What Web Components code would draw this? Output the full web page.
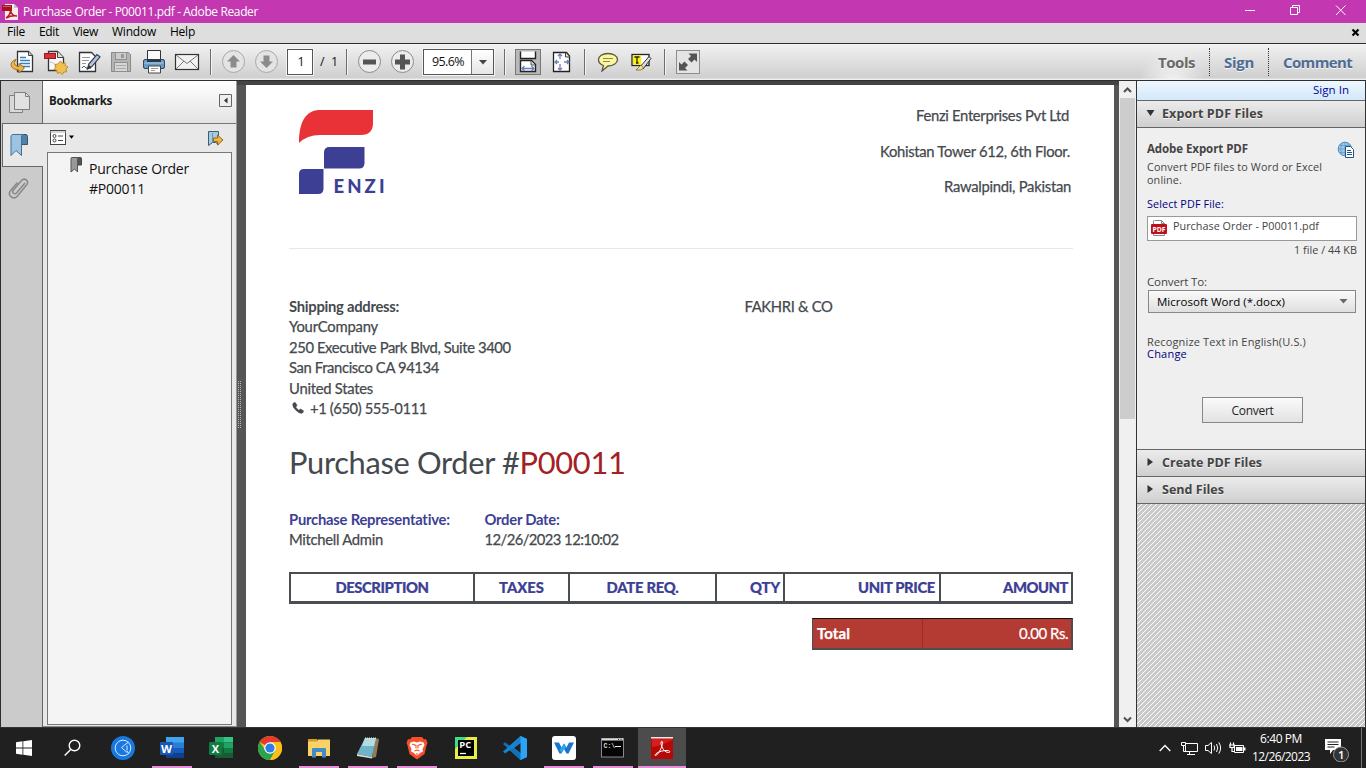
<!DOCTYPE html>
<html lang="en">
<head>
<meta charset="utf-8">
<title>Purchase Order - P00011.pdf - Adobe Reader</title>
<style>
html,body{margin:0;height:100%;overflow:hidden;background:#545454}
body{font-family:"Open Sans","Noto Sans",sans-serif;font-size:12px;color:#111}
</style>
</head>
<body>
<reader-app></reader-app>
<script>
function define(name, css, html) {
  const tpl = document.createElement('template');
  tpl.innerHTML = '<style>*{box-sizing:border-box}svg{display:block;flex:none}fit-text{flex:none}:host{display:block;box-sizing:border-box}' + css + '</style>' + html;
  customElements.define(name, class extends HTMLElement {
    constructor() {
      super();
      this.attachShadow({ mode: 'open' });
    }
    connectedCallback() {
      if (!this.shadowRoot.childNodes.length) this.shadowRoot.append(document.importNode(tpl.content, true));
    }
  });
}

/* Single line label that tracks its letters to occupy the width in its "w" attribute. */
customElements.define('fit-text', class extends HTMLElement {
  constructor() {
    super();
    this.attachShadow({ mode: 'open' }).innerHTML = '<style>:host{display:inline-block;white-space:nowrap}</style><span><slot></slot></span>';
  }
  connectedCallback() {
    const w = parseFloat(this.getAttribute('w'));
    const n = this.textContent.length;
    if (!w || !n) return;
    const natural = this.shadowRoot.querySelector('span').getBoundingClientRect().width;
    this.style.letterSpacing = ((w - natural) / n) + 'px';
  }
});

define('title-bar', `
:host{height:23px;background:#c337b1;color:#fff;display:flex;align-items:center;padding-left:2px;font-size:12px;line-height:23px}
fit-text{margin-left:5px}
.win{margin-left:auto}
`, `
<svg width="16" height="18" viewBox="0 0 16 18"><path d="M3 1h9l4 4v12H3z" fill="#f4eeee"/><path d="M12 1v4h4z" fill="#c9c2c2"/><path d="M0 2h10v6H0z" fill="#a5131d"/><path d="M1 3h8v1H1z" fill="#d65a5f"/><path d="M4 15c3-2 4.500-5 4.500-8 .5 4 3 6 6.500 6-4-.5-7 0-11 2z" fill="none" stroke="#c41320" stroke-width="1.500"/></svg>
<fit-text w="235">Purchase Order - P00011.pdf - Adobe Reader</fit-text>
<svg class="win" width="126" height="23" viewBox="0 0 126 23" fill="none" stroke="#fff" stroke-width="1"><path d="M5 10.500h10"/><path d="M50.500 7.500h7v7h-7zM52.500 7.500v-2h7v7h-2"/><path d="M96 5.500l9.500 9.500M105.500 5.500L96 15"/></svg>
`);

define('menu-bar', `
:host{height:20px;background:#dedede;color:#000;display:flex;align-items:flex-start;font-size:12px;line-height:18px;padding-left:7px}
fit-text+fit-text{margin-left:14px}
svg{margin-left:auto}
`, `
<fit-text w="18">File</fit-text><fit-text w="20">Edit</fit-text><fit-text w="25">View</fit-text><fit-text w="44">Window</fit-text><fit-text w="25">Help</fit-text>
<svg width="16" height="20" viewBox="0 0 16 20"><path d="M2.500 6.500l6 6M8.500 6.500l-6 6" stroke="#000" stroke-width="2.200"/></svg>
`);

define('tool-sep', ':host{flex:none;width:1px;height:26px;background:#6d6d6d;box-shadow:1px 0 #f4f4f4}', '');

define('tool-bar', `
:host{height:38px;border-top:1px solid #2e2e2e;border-bottom:1px solid #2e2e2e;background:linear-gradient(#f7f7f7 0,#f0f0f0 4%,#cfcfcf 95%,#f0f0f0 97%);display:flex;align-items:center;padding-left:8px;font-size:12.500px;line-height:24px;color:#111}
.i{margin-right:4px}
.page{width:26px;height:26px;border:1px solid #555;background:#fff;box-shadow:0 0 0 1px #f5f5f5;text-align:center;padding-left:2px}
.zoom{width:71px;height:26px;border:1px solid #555;background:#fff;box-shadow:0 0 0 1px #f5f5f5;display:flex;padding-left:8px}
.zoom div{margin-left:auto;width:22px;border-left:1px solid #777;background:linear-gradient(#fff,#e6e6e6);display:grid;place-items:center}
.tabs{margin-left:auto;align-self:stretch;display:flex;align-items:center;padding-right:14px;font-size:15px;font-weight:700;color:#4f6d93;text-shadow:0 1px #f5f5f5}
.tabs i{width:0;height:28px;border-left:1px dotted #333}
.tools{color:#6a6a68;padding:0 14px 0 22px;background:radial-gradient(ellipse at 50% 110%,#f4f4f4,transparent 65%);line-height:36px}
`, `
<svg class="i" width="29" height="28" viewBox="0 0 29 28"><path d="M9.500 3.500h11l4 4v16h-15z" fill="#fff" stroke="#333" stroke-width="1.300"/><path d="M20.500 3.500v4h4" fill="#ccc" stroke="#444"/><path d="M12 9.500h6M12 12.500h10M12 15.500h10M14 18.500h8" stroke="#3a7fc0" stroke-width="1.400"/><path d="M8 11.500c-7 2-7 10 3 10.500v3l5.500-5-5.500-4.500v3c-4-.5-6-3-3-7z" fill="#eeb447" stroke="#9a6a1c"/></svg>
<svg class="i" width="29" height="28" viewBox="0 0 29 28"><path d="M7.500 3.500h9l6 6v13h-15z" fill="#f8f8f8" stroke="#333" stroke-width="1.300"/><path d="M16.500 3.500v6h6" fill="#ddd" stroke="#444"/><rect x="3.500" y="5.500" width="11" height="5" fill="#d8303c" stroke="#a01420"/><path d="M9 14c4 0 6 3 5 6" stroke="#bbb" fill="none"/><path d="M19.500 13l1.700 2.500 2.900-.7.200 2.900 2.700 1.300-2 2 .8 2.800-2.900.2-1.600 2.500-2.200-2-2.700 1-.5-2.900-2.700-1.200 1.800-2.300-1-2.700 2.900-.4z" fill="#f3c04f" stroke="#b57d1a" stroke-width=".8"/></svg>
<svg class="i" width="29" height="28" viewBox="0 0 29 28"><path d="M5.500 4.500h12l4 4v15h-16z" fill="#fff" stroke="#333" stroke-width="1.300"/><path d="M8 9.500h8M8 12.500h7M8 15.500h4" stroke="#999"/><path d="M8 20c2-3 3-1 4 0h5" fill="none" stroke="#333"/><path d="M13.500 21l1.300-5L23 6.500l3 2.300-8.300 10z" fill="#b8c6d6" stroke="#2f4358" stroke-width="1.200"/><path d="M13.500 21l1.300-4 2.400 2z" fill="#333"/></svg>
<svg class="i" width="29" height="28" viewBox="0 0 29 28"><path d="M4.500 4.500h17l2 2v17h-19z" fill="#b4b4b4" stroke="#8a8a8a"/><rect x="8.500" y="4.500" width="11" height="7" fill="#cdcdcd" stroke="#909090"/><rect x="14" y="6" width="3" height="4" fill="#999"/><rect x="7.500" y="14.500" width="13" height="9" fill="#d6d6d6" stroke="#909090"/><path d="M9 17.500h10M9 20.500h10" stroke="#aaa"/></svg>
<svg class="i" width="29" height="28" viewBox="0 0 29 28"><path d="M7.500 2.500h13v11h-13z" fill="#fafafa" stroke="#333"/><rect x="3.500" y="11.500" width="21" height="9" rx="1.500" fill="#6b9bc4" stroke="#274b6b"/><path d="M7 11h14v3H7z" fill="#29394a"/><path d="M4.500 15h19" stroke="#a9cdea"/><path d="M8.500 18h12v7h-12z" fill="#fff" stroke="#444"/><path d="M11 20.500h7M11 22.500h4" stroke="#999"/></svg>
<svg width="29" height="28" viewBox="0 0 29 28"><rect x="2.500" y="6.500" width="23" height="15" fill="#f2f2f2" stroke="#333" stroke-width="1.200"/><path d="M3 7l11 8.500L25 7M3 21l8-8M25 21l-8-8" fill="none" stroke="#777"/></svg>
<tool-sep style="margin-left:8px"></tool-sep>
<svg style="margin-left:9px" width="27" height="28" viewBox="0 0 27 28"><circle cx="13.500" cy="13.500" r="11" fill="#e4e4e4" stroke="#a8a8a8"/><path d="M13.500 7l6.500 6.500h-3.500v6h-6v-6H7z" fill="#8b8b8b"/></svg>
<svg style="margin-left:6px" width="27" height="28" viewBox="0 0 27 28"><circle cx="13.500" cy="13.500" r="11" fill="#e4e4e4" stroke="#a8a8a8"/><path d="M13.500 20l6.500-6.500h-3.500v-6h-6v6H7z" fill="#8b8b8b"/></svg>
<div class="page" style="margin-left:7px">1</div>
<fit-text w="18" style="margin-left:7px">/ &nbsp;1</fit-text>
<tool-sep style="margin-left:8px"></tool-sep>
<svg style="margin-left:9px" width="27" height="28" viewBox="0 0 27 28"><circle cx="13.500" cy="13.500" r="11" fill="#ececec" stroke="#8b8b8b"/><rect x="7" y="11.500" width="13" height="5" fill="#555"/></svg>
<svg style="margin-left:6px" width="27" height="28" viewBox="0 0 27 28"><circle cx="13.500" cy="13.500" r="11" fill="#ececec" stroke="#8b8b8b"/><path d="M11 6.500h5v5h5v5h-5v5h-5v-5H6v-5h5z" fill="#555"/></svg>
<div class="zoom" style="margin-left:7px"><fit-text w="32">95.6%</fit-text><div><svg width="8" height="5" viewBox="0 0 8 5"><path d="M0 0h8L4 4.500z" fill="#444"/></svg></div></div>
<tool-sep style="margin-left:10px"></tool-sep>
<svg style="margin-left:10px" width="26" height="26" viewBox="0 0 26 26"><rect x=".5" y=".5" width="25" height="25" fill="#b9b9b9" stroke="#777"/><path d="M5.500 2.500v7h15v-7" fill="#fff" stroke="#222" stroke-width="1.400"/><path d="M5.500 22.500v-11h11l4 4v7z" fill="#fff" stroke="#222" stroke-width="1.400"/><path d="M16 12v4h4" fill="#ddd" stroke="#555"/><path d="M7 19.500h12M9.500 17L7 19.500 9.500 22M16.500 17l2.500 2.500-2.500 2.500" fill="none" stroke="#6a7db8" stroke-width="1.300"/></svg>
<svg style="margin-left:11px" width="20" height="22" viewBox="0 0 20 22"><path d="M1.500 1.500h13l3 3.500v15.500h-16z" fill="#fff" stroke="#222" stroke-width="1.300"/><path d="M13.500 2v4h4" fill="#ddd" stroke="#444"/><path d="M8 3v5M8 13v6M3 11h4M12 11h5M6 5l2-2 2 2M6 17l2 2 2-2M5 9l-2 2 2 2M15 9l2 2-2 2" fill="none" stroke="#7280b4" stroke-width="1.300"/></svg>
<tool-sep style="margin-left:12px"></tool-sep>
<svg style="margin-left:12px" width="22" height="20" viewBox="0 0 22 20"><path d="M11 1.500c5.500 0 9.500 2.600 9.500 6S16.500 14 11 14l-6 5 1.500-5.500C3.500 12.500 1.500 10.500 1.500 7.500c0-3.400 4-6 9.500-6z" fill="#fdf6a0" stroke="#5c5a3e" stroke-width="1.300"/><path d="M6 6.500h10M6 9.500h7" stroke="#8c8753"/></svg>
<svg style="margin-left:12px" width="21" height="20" viewBox="0 0 21 20"><rect x="1" y="2.500" width="17" height="11" fill="#fff" stroke="#222" stroke-width="1.300"/><rect x="2" y="3.500" width="8" height="9" fill="#fdf000"/><path d="M3.500 5h5M6 5v6M5 11h2.500" stroke="#222" stroke-width="1.300"/><path d="M9 15L18 4.500l2 2L12 17z" fill="#ddd" stroke="#333"/><path d="M5 18h5l2.500-2-2.500-3z" fill="#f7ea53" stroke="#555" stroke-width=".7"/></svg>
<tool-sep style="margin-left:12px"></tool-sep>
<svg style="margin-left:11px" width="24" height="24" viewBox="0 0 24 24"><rect x=".5" y=".5" width="23" height="23" fill="#e4e4e4" stroke="#8d8d8d"/><path d="M12.500 3.500h8.500V12l-2.500-2.500-3 3-3.500-3.500 3-3zM3 12v8.500h8.500L9 18l3-3-3.500-3.500-3 3z" fill="#555"/></svg>
<div class="tabs"><div class="tools"><fit-text w="37">Tools</fit-text></div><i></i><fit-text w="30" style="margin:0 14px">Sign</fit-text><i></i><fit-text w="69" style="margin-left:14px">Comment</fit-text></div>
`);

define('nav-strip', `
:host{width:43px;border-left:1px solid #2e2e2e;border-right:1px solid #666;background:#cbcbcb;flex:none}
div{height:42px;display:grid;place-items:center}
.sel{height:44px;background:#e8e8e8;border:1px solid #666;border-right:0;margin:0 -1px 0 1px}
svg{margin-right:5px}
`, `
<div><svg width="24" height="26" viewBox="0 0 24 26" fill="#d9d9d9" stroke="#808080"><path d="M2.500 6.500h13v17h-13z"/><path d="M7.500 3.500h11l4 4v13h-15z" fill="#e2e2e2"/><path d="M18.500 3.500v4h4" fill="none"/></svg></div>
<div class="sel"><svg style="margin-right:8px" width="20" height="24" viewBox="0 0 20 24"><path d="M12 1.500h5c1 0 1.500 1 1.500 2v8h-6z" fill="#4f82a8" stroke="#35546c"/><path d="M4 1.500h11c-2 0-2.500 1-2.500 3v18L7 17.500l-5 5V4c0-1.500.5-2.500 2-2.500z" fill="#9cc4e2" stroke="#46708f"/></svg></div>
<div><svg width="24" height="26" viewBox="0 0 24 26" fill="none" stroke="#888" stroke-width="1.500"><path d="M18 8l-8.500 10c-2 2-5-.5-3.200-2.800L14.500 5.500c3-3.300 8 .4 5.200 4.200L10.500 21c-4 4.500-10.500-.5-7-5.300l7-8.200"/></svg></div>
`);

define('bookmarks-panel', `
:host{width:194px;flex:none;background:#e8e8e8;border-right:1px solid #999;border-bottom:1px solid #888;display:flex;flex-direction:column}
header{height:43px;border-bottom:1px solid #777;background:linear-gradient(#fff,#e3e3e3);display:flex;align-items:center;justify-content:space-between;padding:0 4px 3px 6px;font-weight:700;font-size:11.500px;color:#1c1c1c}
.opts{height:28px;display:flex;justify-content:space-between;align-items:center;padding:0 12px 0 7px}
.list{flex:1;margin:0 4px 1px 4px;border:1px solid #777;background:#f4f4f4;display:flex;align-items:flex-start;padding:4px 0 0 22px;font-size:14px;line-height:20px;color:#111}
.list div{margin:2px 0 0 7px}
`, `
<header><fit-text w="63">Bookmarks</fit-text><svg width="13" height="13" viewBox="0 0 13 13"><path d="M.5.500h12v12H.5z" fill="#efefef" stroke="#666"/><path d="M8.500 3.500v6L5 6.500z" fill="#333"/></svg></header>
<div class="opts"><svg width="26" height="16" viewBox="0 0 26 16"><rect x=".5" y=".5" width="15" height="14" fill="#fff" stroke="#444"/><path d="M0 2h16" stroke="#aaa"/><circle cx="4.500" cy="6" r="1.500" fill="none" stroke="#444"/><circle cx="4.500" cy="10.500" r="1.500" fill="none" stroke="#444"/><path d="M8 6h5M8 10.500h5" stroke="#444"/><path d="M19 5.500h5l-2.500 3.200z" fill="#000"/></svg>
<svg width="17" height="17" viewBox="0 0 17 17"><path d="M1.500 1.500h10v13l-3-2-3 0-4 3z" fill="#a8cbe4" stroke="#3b5d78"/><path d="M5.500 3v9" stroke="#6a94b3"/><path d="M6.500 8h4V5l5.500 5-5.500 5v-3.500h-4z" fill="#f2b63c" stroke="#94681a"/></svg></div>
<div class="list"><svg width="12" height="16" viewBox="0 0 12 16"><path d="M7 .5h3.500q1 0 1 1V8H7z" fill="#555" stroke="#444"/><path d="M1.500.5H9Q7.500.5 7.500 3v12L4.500 12l-3.500 3V1.500z" fill="#999" stroke="#555"/></svg>
<div><fit-text w="100">Purchase Order</fit-text><br><fit-text w="56">#P00011</fit-text></div></div>
`);

define('panel-splitter', `
:host{width:9px;flex:none;background:#555;border-top:4px solid #444;display:grid;align-content:center;padding:0 0 3px 1px}
`, `<svg width="6" height="48"><defs><pattern id="g" width="2" height="2" patternUnits="userSpaceOnUse"><rect width="1" height="1" fill="#bbb"/></pattern></defs><rect width="4" height="48" fill="url(#g)"/></svg>`);

define('company-logo', ':host{width:110px;height:100px}', `
<svg width="110" height="100" viewBox="0 0 110 100">
<path d="M10 33C10 10 18 0 31 0H84V13Q84 25 72 25H31Q18 25 10 33z" fill="#e93237"/>
<path d="M35 42.500Q35 37 40.500 37H75.500V53Q75.500 58.500 70 58.500H35z" fill="#3d3f94"/>
<path d="M10 64Q10 59 15 59H34.500V78.500Q34.500 84 29 84H10z" fill="#3d3f94"/>
<text x="44.500" y="83.300" font-family="Lato,sans-serif" font-weight="900" font-size="18.500" textLength="51" fill="#3d3f94" stroke="none">ENZI</text></svg>
`);

define('order-table', `
:host{display:grid;grid-template-columns:182px 93px 145px 66px 154px 130px;column-gap:2px;background:#4a4e52;border:2px solid #4a4e52;border-bottom-width:3px;color:#3d3f94;font-weight:900;font-size:14.800px;line-height:27px;-webkit-text-stroke:.2px}
div{background:#fff;text-align:right;padding:0 4px 0 0}
.c{text-align:center;padding:0}
`, `
<div class="c"><fit-text w="93">DESCRIPTION</fit-text></div><div class="c"><fit-text w="45">TAXES</fit-text></div><div class="c"><fit-text w="72">DATE REQ.</fit-text></div><div style="padding-right:3px"><fit-text w="30">QTY</fit-text></div><div><fit-text w="77">UNIT PRICE</fit-text></div><div style="padding-right:3px"><fit-text w="65">AMOUNT</fit-text></div>
`);

define('order-total', `
:host{width:261px;height:32px;margin:14px 0 0 auto;display:grid;grid-template-columns:110px 1fr;background:#b43b34;border:solid #4a4e52;border-width:1px 2px 2px 1px;border-top-color:#111;color:#fff;font-size:15px;line-height:29px}
b{padding-left:4px;border-right:1px solid #a02a26}
div{text-align:right;padding-right:3px}
`, '<b><fit-text w="33">Total</fit-text></b><div><fit-text w="49">0.00 Rs.</fit-text></div>');

define('pdf-page', `
:host{width:868px;flex:none;background:#fff;padding:0 41px 0 43px;font-family:Lato,sans-serif;font-size:14.800px;color:#45494d;-webkit-text-stroke:.25px}
.head{height:163px;display:flex;justify-content:space-between;padding-top:25px}
.addr{text-align:right;line-height:35.500px;margin-top:-12px}
.addr div:nth-child(1){padding-right:4px}.addr div:nth-child(2){padding-right:3px}.addr div:nth-child(3){padding-right:2px}
.rule{height:1px;background:#e8e8e8}
.ship{display:grid;grid-template-columns:455.500px 1fr;padding-top:46.600px;line-height:20.500px;height:179px}
.ph{display:flex;align-items:center}
h1{margin:0;font-weight:400;font-size:30.800px;line-height:40px;height:81px;padding-top:15px;-webkit-text-stroke:0}
h1 span{color:#a32024}
.meta{display:grid;grid-template-columns:195.500px 1fr;grid-template-rows:20px 20px;line-height:20px;height:63px;align-content:start}
.meta b,.meta b fit-text{color:#3d3f94}
b{-webkit-text-stroke:0}
`, `
<div class="head"><company-logo></company-logo><div class="addr"><div><fit-text w="153">Fenzi Enterprises Pvt Ltd</fit-text></div><div><fit-text w="190">Kohistan Tower 612, 6th Floor.</fit-text></div><div><fit-text w="127">Rawalpindi, Pakistan</fit-text></div></div></div>
<div class="rule"></div>
<div class="ship"><div><b><fit-text w="110">Shipping address:</fit-text></b><br><fit-text w="89">YourCompany</fit-text><br><fit-text w="222">250 Executive Park Blvd, Suite 3400</fit-text><br><fit-text w="150">San Francisco CA 94134</fit-text><br><fit-text w="84">United States</fit-text><div class="ph"><svg style="margin:0 6px 0 3px" width="12" height="12" viewBox="0 0 12 12"><path d="M.8 1.800Q1.800.5 3.300.6L5 3.600 3.700 5.100Q4.800 7.200 6.900 8.300L8.400 7l3 1.700q.1 1.500-1.200 2.500Q8 12 4.600 8.900.2 5.200.8 1.800z" fill="#45494d" stroke="#45494d" stroke-width=".6"/></svg><fit-text w="117">+1 (650) 555-0111</fit-text></div></div><div><fit-text w="88">FAKHRI &amp; CO</fit-text></div></div>
<h1><fit-text w="336.500">Purchase Order #<span>P00011</span></fit-text></h1>
<div class="meta"><b><fit-text w="161">Purchase Representative:</fit-text></b><b><fit-text w="75">Order Date:</fit-text></b><div><fit-text w="94">Mitchell Admin</fit-text></div><div><fit-text w="134">12/26/2023 12:10:02</fit-text></div></div>
<order-table></order-table>
<order-total></order-total>
`);

define('doc-view', `
:host{flex:1;min-width:0;background:#555;border-top:4px solid #444;display:flex}
`, '<pdf-page></pdf-page>');

define('scroll-bar', `
:host{width:17px;flex:none;background:#f0f0f0;display:flex;flex-direction:column;align-items:center;padding:5px 0 4px}
.thumb{width:15px;height:321px;background:#cdcdcd;margin:4px 0 auto}
`, `
<svg width="9" height="8" viewBox="0 0 9 8"><path d="M1 6l3.500-3.500L8 6" fill="none" stroke="#505050" stroke-width="2"/></svg><div class="thumb"></div><svg width="9" height="7" viewBox="0 0 9 7"><path d="M1 1.500L4.500 5 8 1.500" fill="none" stroke="#505050" stroke-width="2"/></svg>
`);

define('section-head', `
:host{height:27px;background:linear-gradient(#ececec,#cfcfcf);border-bottom:1px solid #666;display:flex;align-items:center;padding:0 0 2px 9px;font-size:12.500px;font-weight:700;color:#444;text-shadow:0 1px #f4f4f4}
svg{margin-right:7px}
.down{display:none}
:host([open]) .down{display:block}
:host([open]) .right{display:none}
`, `
<svg class="down" width="9" height="8" viewBox="0 0 9 8"><path d="M.5 1h8L4.500 7z" fill="#333"/></svg><svg class="right" width="9" height="8" viewBox="0 0 9 8"><path d="M1.500 0v8l5.500-4z" fill="#333"/></svg><slot></slot>
`);

define('export-form', `
:host{height:322px;background:#efefef;padding:13px 8px 0 10px;font-size:10.800px;line-height:13px;color:#444;border-bottom:1px solid #666}
.top{display:flex;justify-content:space-between;height:50px}
.top b{font-size:11.500px;line-height:15px}
.lnk{color:#00007f}
.file{height:25px;border:1px solid #999;background:#fff;display:flex;align-items:center;padding:0 0 1px 2px;margin-top:6px}
.file fit-text{margin:-5px 0 0 5px}
.size{text-align:right;margin-top:2px}
.sel{height:23px;margin:2px 1px 0;border:1px solid #888;background:linear-gradient(#fafafa,#dfdfdf);display:flex;align-items:center;justify-content:space-between;padding:0 7px 0 8px;font-size:11.500px;color:#000}
.btn{width:101px;height:26px;margin:37px 0 0 55px;border:1px solid #888;background:linear-gradient(#fafafa,#e2e2e2);display:grid;place-content:center;font-size:12px;color:#222}
`, `
<div class="top"><div><b><fit-text w="101">Adobe Export PDF</fit-text></b><br><fit-text w="175" style="margin-top:4px">Convert PDF files to Word or Excel</fit-text><br><fit-text w="35">online.</fit-text></div>
<svg style="margin-right:2px" width="18" height="18" viewBox="0 0 18 18"><circle cx="8" cy="8" r="6.800" fill="#9ec9ea" stroke="#4a86b8"/><path d="M1.500 8h13M8 1.500v13M3 4.500h10M3 11.500h10M5 2.500q-3 5.500 0 11M11 2.500q3 5.500 0 11" stroke="#5c95c2" fill="none" stroke-width=".7"/><path d="M8.500 5.500h5l3 3v8h-8z" fill="#fff" stroke="#24518a"/><path d="M10 9.500h4M10 11.500h5M10 13.500h5" stroke="#24518a"/></svg></div>
<div class="lnk" style="margin-top:6px"><fit-text w="77">Select PDF File:</fit-text></div>
<div class="file"><svg width="18" height="18" viewBox="0 0 18 18"><path d="M4.500 1.500h7l3 3v12h-11v-15" fill="#fff" stroke="#888"/><path d="M11.500 1.500v3h3" fill="none" stroke="#888"/><rect x="1" y="5" width="16" height="10" rx="1" fill="#c00f1c"/><text x="2.500" y="12.800" font-family="Open Sans,sans-serif" font-size="7.500" font-weight="700" textLength="13" fill="#fff" lengthAdjust="spacingAndGlyphs">PDF</text></svg><fit-text w="146">Purchase Order - P00011.pdf</fit-text></div>
<div class="size"><fit-text w="63">1 file / 44 KB</fit-text></div>
<div style="margin-top:19px;font-size:11.500px"><fit-text w="60">Convert To:</fit-text></div>
<div class="sel"><fit-text w="128">Microsoft Word (*.docx)</fit-text><svg width="9" height="5" viewBox="0 0 9 5"><path d="M.5 0h8l-4 4.500z" fill="#666"/></svg></div>
<div style="margin-top:23px;font-size:11px;line-height:12px"><fit-text w="159">Recognize Text in English(U.S.)</fit-text><br><fit-text class="lnk" w="40">Change</fit-text></div>
<div class="btn"><fit-text w="42">Convert</fit-text></div>
`);

define('tools-panel', `
:host{width:230px;flex:none;border:solid #333;border-width:0 1px;display:flex;flex-direction:column}
.in{height:20px;background:linear-gradient(#eef7ff,#d3e8f9);border-bottom:1px solid #666;text-align:right;padding-right:16px;font-size:11.500px;line-height:18px;color:#0000a0}
svg{flex:1}
`, `
<div class="in"><fit-text w="36">Sign In</fit-text></div>
<section-head open><fit-text w="101">Export PDF Files</fit-text></section-head>
<export-form></export-form>
<section-head><fit-text w="100">Create PDF Files</fit-text></section-head>
<section-head><fit-text w="62">Send Files</fit-text></section-head>
<svg width="228"><defs><pattern id="h" width="5" height="5" patternUnits="userSpaceOnUse"><path d="M4 0h1v1h-1zM3 1h1v1h-1zM2 2h1v1h-1zM1 3h1v1h-1zM0 4h1v1h-1z" fill="#fff" shape-rendering="crispEdges"/></pattern></defs><rect width="228" height="300" fill="#cacaca"/><rect width="228" height="300" fill="url(#h)"/></svg>
`);

define('task-button', `
:host{width:49px;height:40px;flex:none;display:grid;place-items:center;padding:0 4px}
:host([run]){background:linear-gradient(#e48fd8,#e48fd8) 5px 38px/40px 2px no-repeat}
:host([active]){background:linear-gradient(#e48fd8,#e48fd8) 1px 38px/48px 2px no-repeat,linear-gradient(#4b4c4b,#4b4c4b) 1px 0/48px 40px no-repeat}
`, '<slot></slot>');

define('task-bar', `
:host{height:40px;background:#1f201f;display:flex;color:#fff;font-size:11px}
.tray{margin-left:auto;display:flex;align-items:center}
.clock{width:66px;text-align:center;line-height:18px;margin-left:2px;font-size:12px}
.show{width:1px;height:40px;background:#777;margin:0 4px 0 11px}
`, `
<task-button style="width:48px"><svg width="16" height="16" viewBox="0 0 16 16" fill="#fff"><path d="M0 2.300l6.500-1v6.200H0zM7.300 1.200L16 0v7.500H7.300zM0 8.400h6.500v6.300l-6.500-1zM7.300 8.400H16V16l-8.700-1.200z"/></svg></task-button>
<task-button style="width:50px"><svg style="margin-right:2px" width="17" height="18" viewBox="0 0 17 18" fill="none" stroke="#fff" stroke-width="1.400"><circle cx="10.500" cy="6.500" r="5.300"/><path d="M6.700 10.500L.7 16.500"/></svg></task-button>
<task-button><svg width="24" height="24" viewBox="0 0 24 24"><circle cx="12" cy="12" r="12" fill="#1877e0"/><circle cx="12" cy="12" r="7.800" fill="none" stroke="#d9ecff"/><path d="M17.500 6l-7 5.500 5.500 5M18 18l-2-3M16 9.500v5" fill="none" stroke="#d9ecff"/></svg></task-button>
<task-button run><svg width="24" height="24" viewBox="0 0 24 24"><path d="M6 1h18v6H6z" fill="#41a5ee"/><path d="M6 6.500h18V12H6z" fill="#2b7cd3"/><path d="M6 12h18v5.500H6z" fill="#185abd"/><path d="M6 17.500h18V22H6z" fill="#103f91"/><rect y="6" width="13" height="13" rx="1" fill="#1a56b4"/><text x="1" y="16.500" font-family="Open Sans" font-size="11" font-weight="700" fill="#fff" textLength="11" lengthAdjust="spacingAndGlyphs">W</text></svg></task-button>
<task-button><svg width="24" height="24" viewBox="0 0 24 24"><path d="M6 1h9v10H6z" fill="#21a366"/><path d="M15 1h9v5.500h-9z" fill="#33c481"/><path d="M15 6.500h9V12h-9z" fill="#21a366"/><path d="M6 6.500h9V12H6zM15 12h9v5h-9z" fill="#107c41"/><path d="M6 12h9v5h9v5H6z" fill="#185c37"/><rect y="6" width="13" height="13" rx="1" fill="#107c41"/><text x="2.700" y="16.500" font-family="Open Sans" font-size="11" font-weight="700" fill="#fff">X</text></svg></task-button>
<task-button><svg width="24" height="24" viewBox="0 0 24 24"><circle cx="12" cy="12" r="12" fill="#fbc116"/><path d="M12 12L1.600 6A12 12 0 0 1 22.400 6z" fill="#e33b2e"/><path d="M1.600 6A12 12 0 0 0 12 24l5-9-8 1.500z" fill="#2ba24c"/><path d="M12 6h10.400A12 12 0 0 1 12 24l5.200-9z" fill="#fbc116"/><circle cx="12" cy="12" r="5.800" fill="#fff"/><circle cx="12" cy="12" r="4.600" fill="#2f7de9"/></svg></task-button>
<task-button run><svg width="22" height="20" viewBox="0 0 22 20"><path d="M0 1h9l1 2v4H0z" fill="#d99b1b"/><path d="M0 3.500h9l1-2h12V18H0z" fill="#fbd267"/><path d="M4 19.500V11q0-1 1-1h12q1 0 1 1v8.500h-4V14H8v5.500z" fill="#3f8cc9"/></svg></task-button>
<task-button run><svg width="24" height="24" viewBox="0 0 24 24"><path d="M19 2l4 1-3 18-4 1z" fill="#947b55"/><path d="M9 2h11l-4 19-15-3z" fill="#6fb4c8"/><path d="M9 2h11l-2 8H6z" fill="#b5dbe4"/><path d="M1 18l15 3v1.500L1 20z" fill="#dcdcdc"/><path d="M9 2h11" stroke="#eee" stroke-dasharray="1 1"/></svg></task-button>
<task-button run><svg width="22" height="24" viewBox="0 0 22 24"><path d="M6 1h10l2 2.500 2-.5 1.500 4-1 2.500-2 8.500L11 23.500 3.500 18l-2-8.500L.5 7 2 3l2 .5z" fill="#f4502a"/><path d="M4.500 6.500L8 5.500l3 1 3-1 3.500 1 1 2.500-2 4 .5 2.500-3 1.500-3 3-3-3-3-1.500.5-2.500-2-4z" fill="#fff"/><path d="M6 8l4 1.500v3M16 8l-4 1.500v3M8.500 15L11 14l2.500 1M11 17v3" fill="none" stroke="#f4502a" stroke-width="1.100"/></svg></task-button>
<task-button><svg width="22" height="22" viewBox="0 0 22 22"><rect width="22" height="22" fill="#e9ee46"/><path d="M0 0h12L0 12z" fill="#3fdc84"/><rect x="3" y="3" width="16" height="16" fill="#000"/><text x="4.300" y="11" font-family="Open Sans" font-size="8.500" font-weight="700" fill="#fff" textLength="12" lengthAdjust="spacingAndGlyphs">PC</text><path d="M5 16.500h6" stroke="#fff" stroke-width="1.300"/></svg></task-button>
<task-button><svg width="24" height="24" viewBox="0 0 24 24"><path d="M17.500 0L24 3v18l-6.500 3L5 12.500zM18 6.500L11 12l7 5.500z" fill="#1f8fdf" fill-rule="evenodd"/><path d="M0 8l2-1.800L18 18v6h-.5z" fill="#0f71bb"/><path d="M0 15.500l2 2L18 6.500V0h-.5z" fill="#1683cf"/><path d="M17.500 0L24 3v18l-6.500 3z" fill="#2aa4f4"/></svg></task-button>
<task-button run><svg width="24" height="24" viewBox="0 0 24 24"><rect width="24" height="24" rx="3" fill="#fff"/><path d="M2 6.500h5l2.500 5L12 7.500l2.500 4 2.500-5h5l-5.500 11h-2L12 13l-2.500 4.500h-2z" fill="#1a73cc"/><path d="M12 7.500l2.500 4L12 13l-2.500 4.500-2-4 2-2z" fill="#27a9ec"/></svg></task-button>
<task-button run><svg width="23" height="20" viewBox="0 0 23 20"><rect x=".5" y=".5" width="22" height="18.500" fill="#050505" stroke="#8a8a8a"/><path d="M1 1.500h21" stroke="#ddd" stroke-width="2"/><path d="M17 1.500h1M19.500 1.500h1" stroke="#333"/><text x="2.500" y="9.500" font-family="Liberation Mono" font-size="6.500" font-weight="700" fill="#ddd">C:\\</text><path d="M14 8.500h6" stroke="#eee"/></svg></task-button>
<task-button active><svg width="22" height="22" viewBox="0 0 22 22"><rect width="22" height="22" rx="1" fill="#b80707"/><path d="M0 0h22v1.500H0z" fill="#f2eaea"/><path d="M1 10Q10 9 21 3v-1H1z" fill="#d3201d"/><path d="M11 4.500C9.500 4.500 9.800 7 11 10c1.500 3.500 4 5.500 6.500 5.500 2.500 0 1.500-2-1.500-2-4 0-7 .8-10 2.500-3 1.800-2 3.500-.3 2 2-1.800 4-5.500 5-8.500.8-2.500 1.300-5 .3-5z" fill="none" stroke="#fff" stroke-width="1"/></svg></task-button>
<div class="tray">
<svg width="12" height="8" viewBox="0 0 12 8"><path d="M.7 7L6 1.500 11.300 7" fill="none" stroke="#fff" stroke-width="1.300"/></svg>
<svg style="margin-left:10px" width="17" height="15" viewBox="0 0 17 15" fill="none" stroke="#fff"><path d="M4.500 2.500h12v8h-12V5M8.500 11v3M6 13.500h8"/><path d="M.5 1.500h4v3h-4zM2.500 4.500v6H5"/></svg>
<svg style="margin-left:7px" width="17" height="14" viewBox="0 0 17 14" fill="none" stroke="#fff"><path d="M.5 4.500h2.500l3.500-3v11l-3.500-3H.5z"/><path d="M9 4.500q1.500 2.500 0 5M11.500 3q2.500 4 0 8M13.800 1.300q3.600 5.700 0 11.400"/></svg>
<svg style="margin-left:7px" width="17" height="13" viewBox="0 0 17 13"><path d="M5.500 3.500h9v7h-9z" fill="none" stroke="#fff"/><path d="M7 5h6.500v4H7zM15 5.500h1.500v3H15z" fill="#fff"/><path d="M1.500.5v2M4.500.5v2M0 3h6M1 3v2.500h4V3M3 5.500v4h2.500" fill="none" stroke="#fff" stroke-width="1.200"/></svg>
<div class="clock"><fit-text w="42">6:40 PM</fit-text><br><fit-text w="58">12/26/2023</fit-text></div>
<svg style="margin-left:10px" width="26" height="28" viewBox="0 0 26 28"><path d="M1 5h16v11H9l-3 4v-4H1z" fill="#fff"/><path d="M3.500 8h11M3.500 10.500h11M3.500 13h7" stroke="#222"/><circle cx="17" cy="20.500" r="7.500" fill="#333" stroke="#999"/><text x="14" y="24.500" font-family="Open Sans" font-size="11.500" font-weight="600" fill="#fff">1</text></svg>
<div class="show"></div></div>
`);

define('reader-app', `
:host{display:grid;grid-template-rows:23px 20px 38px minmax(0,1fr) 40px;height:768px;width:1366px}
main{display:flex;min-height:0;overflow:hidden;border-bottom:1px solid #333}
`, `
<title-bar></title-bar><menu-bar></menu-bar><tool-bar></tool-bar>
<main><nav-strip></nav-strip><bookmarks-panel></bookmarks-panel><panel-splitter></panel-splitter><doc-view></doc-view><scroll-bar></scroll-bar><tools-panel></tools-panel></main>
<task-bar></task-bar>
`);
</script>
</body>
</html>
